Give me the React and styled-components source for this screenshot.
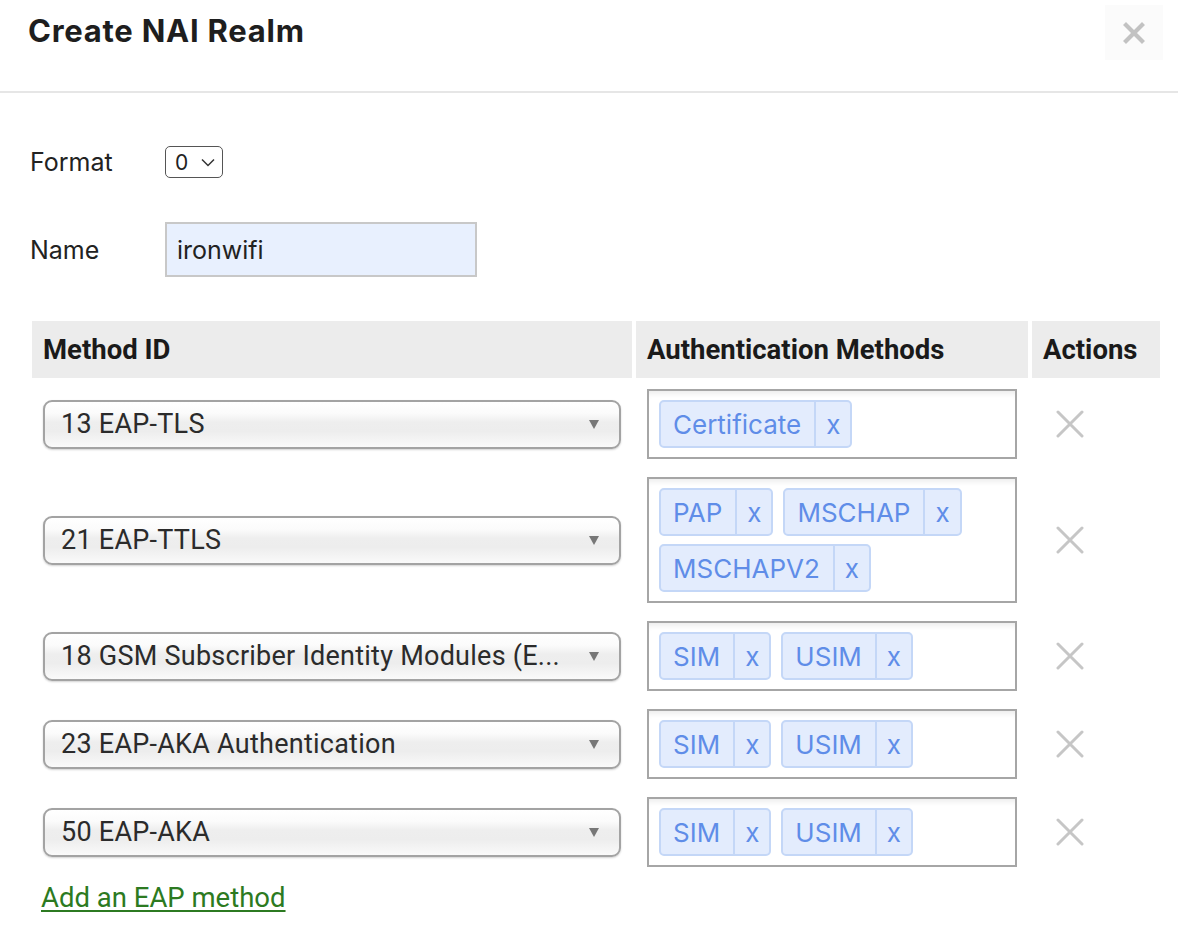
import React from "react";
import styled, { createGlobalStyle } from "styled-components";

const GlobalStyle = createGlobalStyle`
  body {
    margin: 0;
    background: #fff;
    font-family: "Inter", "Liberation Sans", sans-serif;
    color: #222;
  }
`;

const Modal = styled.div`
  width: 1178px;
  min-height: 928px;
  background: #fff;
`;

const Header = styled.div`
  height: 91px;
  border-bottom: 2px solid #e6e6e6;
  padding: 0 15px 0 28px;
  display: flex;
  justify-content: space-between;
  align-items: flex-start;
`;

const Title = styled.h1`
  margin: 0;
  padding-top: 12px;
  font-family: "Inter", sans-serif;
  font-weight: 700;
  font-size: 31px;
  letter-spacing: 0.75px;
  color: #1e1e1e;
`;

const CloseButton = styled.div`
  margin-top: 5px;
  width: 58px;
  height: 55px;
  background: #fbfbfb;
  display: flex;
  align-items: center;
  justify-content: center;
  cursor: pointer;
`;

const Body = styled.div`
  padding: 52px 18px 0 30px;
`;

const FieldRow = styled.div`
  display: flex;
  align-items: center;
  height: ${(props) => props.height}px;
  margin-bottom: ${(props) => props.gap || 0}px;
`;

const Label = styled.div`
  width: 135px;
  font-size: 25px;
  color: #222;
`;

const SmallSelect = styled.div`
  box-sizing: border-box;
  height: 32px;
  width: 58px;
  border: 1.5px solid #555;
  border-radius: 5px;
  display: flex;
  align-items: center;
  justify-content: space-between;
  padding: 0 7px 0 9px;
  font-size: 21px;
  color: #222;
`;

const TextInput = styled.div`
  box-sizing: border-box;
  width: 312px;
  height: 55px;
  border: 2px solid #c8c8c8;
  background: #e8f0fe;
  display: flex;
  align-items: center;
  padding: 0 10px;
  font-size: 25px;
  color: #222;
`;

const Table = styled.div`
  margin-top: 44px;
  margin-left: 2px;
  display: grid;
  grid-template-columns: 600px 392px 128px;
  column-gap: 4px;
  row-gap: 4px;
`;

const HeadCell = styled.div`
  height: 57px;
  background: #ececec;
  display: flex;
  align-items: center;
  padding: 0 11px;
  font-family: "Roboto", "Liberation Sans", sans-serif;
  font-weight: 700;
  font-size: 27.5px;
  color: #1a1a1a;
`;

const Cell = styled.div`
  display: flex;
  align-items: center;
  padding: 7px 11px;
`;

const ActionCell = styled(Cell)`
  padding-left: 24px;
`;

const MethodSelect = styled.div`
  box-sizing: border-box;
  width: 100%;
  height: 49px;
  border: 2px solid #a3a3a3;
  border-radius: 9px;
  background: linear-gradient(
    to bottom,
    #ffffff 0%,
    #fbfbfb 25%,
    #eeeeee 45%,
    #ededed 65%,
    #f6f6f6 90%,
    #fafafa 100%
  );
  box-shadow: 0 1px 2px rgba(0, 0, 0, 0.18);
  display: flex;
  align-items: center;
  justify-content: space-between;
  padding: 0 20px 0 16px;
  font-family: "Roboto", "Liberation Sans", sans-serif;
  font-size: 27px;
  letter-spacing: 0.25px;
  color: #2b2b2b;
  white-space: nowrap;
`;

const Arrow = styled.span`
  width: 0;
  height: 0;
  border-left: 5.5px solid transparent;
  border-right: 5.5px solid transparent;
  border-top: 9px solid #777;
`;

const TagBox = styled.div`
  box-sizing: border-box;
  width: 100%;
  border: 2px solid #a6a6a6;
  padding: 9px 10px;
  display: flex;
  flex-wrap: wrap;
  gap: 8px 10px;
  background: #fff;
  box-shadow: inset 0 7px 6px -5px rgba(0, 0, 0, 0.09);
`;

const Tag = styled.div`
  box-sizing: border-box;
  height: 48px;
  display: flex;
  align-items: stretch;
  background: #e3ecfd;
  border: 2px solid #c4d7f7;
  border-radius: 5px;
  color: #5f8de8;
  font-family: "Inter", sans-serif;
  font-size: 26px;
`;

const TagLabel = styled.span`
  display: flex;
  align-items: center;
  padding: 0 13px 0 12px;
`;

const TagRemove = styled.span`
  display: flex;
  align-items: center;
  padding: 0 10px;
  border-left: 2px solid #c4d7f7;
`;

const AddLink = styled.a`
  display: inline-block;
  margin: 7px 0 0 11px;
  font-family: "Roboto", "Liberation Sans", sans-serif;
  font-size: 27.5px;
  color: #2c7a21;
  text-decoration: underline;
  text-underline-offset: 3px;
  cursor: pointer;
`;

const CloseIcon = () => (
  <svg width="22" height="22" viewBox="0 0 22 22">
    <path d="M3 3 L19 19 M19 3 L3 19" stroke="#c2c2c2" strokeWidth="4.2" strokeLinecap="square" />
  </svg>
);

const RemoveIcon = () => (
  <svg width="28" height="28" viewBox="0 0 28 28">
    <path d="M2 2 L26 26 M26 2 L2 26" stroke="#c6c6c6" strokeWidth="3" strokeLinecap="round" />
  </svg>
);

const Chevron = () => (
  <svg width="14" height="9" viewBox="0 0 14 9">
    <path d="M1 1.5 L7 7.5 L13 1.5" fill="none" stroke="#333" strokeWidth="1.5" />
  </svg>
);

const methods = [
  { id: "13 EAP-TLS", auth: ["Certificate"] },
  { id: "21 EAP-TTLS", auth: ["PAP", "MSCHAP", "MSCHAPV2"] },
  { id: "18 GSM Subscriber Identity Modules (E...", auth: ["SIM", "USIM"] },
  { id: "23 EAP-AKA Authentication", auth: ["SIM", "USIM"] },
  { id: "50 EAP-AKA", auth: ["SIM", "USIM"] },
];

const App = () => {
  return (
    <Modal>
      <GlobalStyle />
      <Header>
        <Title>Create NAI Realm</Title>
        <CloseButton>
          <CloseIcon />
        </CloseButton>
      </Header>
      <Body>
        <FieldRow height={34} gap={43}>
          <Label>Format</Label>
          <SmallSelect>
            0
            <Chevron />
          </SmallSelect>
        </FieldRow>
        <FieldRow height={55}>
          <Label>Name</Label>
          <TextInput>ironwifi</TextInput>
        </FieldRow>

        <Table>
          <HeadCell>Method ID</HeadCell>
          <HeadCell>Authentication Methods</HeadCell>
          <HeadCell>Actions</HeadCell>
          {methods.map((m, i) => (
            <React.Fragment key={i}>
              <Cell>
                <MethodSelect>
                  {m.id}
                  <Arrow />
                </MethodSelect>
              </Cell>
              <Cell>
                <TagBox>
                  {m.auth.map((a) => (
                    <Tag key={a}>
                      <TagLabel>{a}</TagLabel>
                      <TagRemove>x</TagRemove>
                    </Tag>
                  ))}
                </TagBox>
              </Cell>
              <ActionCell>
                <RemoveIcon />
              </ActionCell>
            </React.Fragment>
          ))}
        </Table>
        <AddLink>Add an EAP method</AddLink>
      </Body>
    </Modal>
  );
};

export default App;
